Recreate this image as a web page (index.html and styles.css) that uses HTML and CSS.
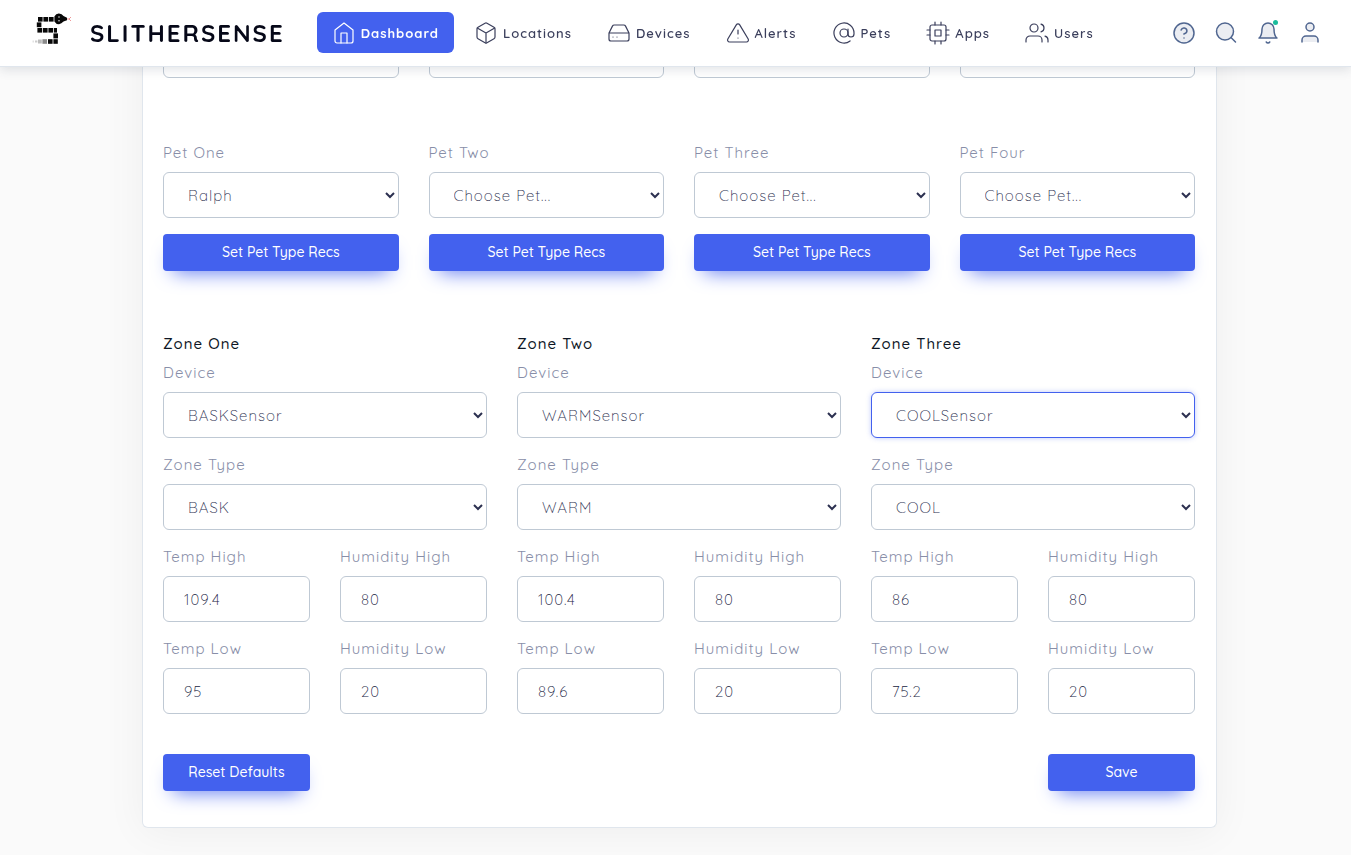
FILE: index.html
```html
<!DOCTYPE html>
<html lang="en">
<head>
<meta charset="utf-8">
<title>SlitherSense</title>
<meta name="viewport" content="width=device-width, initial-scale=1">
<link rel="stylesheet" href="styles.css">
</head>
<body>
<header class="topbar">
  <a class="brand" href="#">
    <svg class="brand-mark" viewBox="0 0 40 34" aria-hidden="true">
      <g fill="#080808">
        <rect x="6" y="5" width="4.6" height="4.6"/><rect x="11.4" y="5" width="4.6" height="4.6"/><rect x="16.8" y="5" width="4.8" height="4.6"/>
        <rect x="4.8" y="10.4" width="4.6" height="4.8"/>
        <rect x="5.4" y="16" width="4.8" height="4.6"/><rect x="11" y="16" width="4.6" height="4.6"/><rect x="16.4" y="16" width="4.6" height="4.6"/><rect x="21.8" y="16" width="3.2" height="4.6"/>
        <rect x="21.4" y="21.4" width="4.6" height="5"/>
        <rect x="21.4" y="27.2" width="4.4" height="4.6"/><rect x="16" y="27.2" width="4.6" height="4.6"/>
        <path d="M22.4 4.6Q24 1.4 27 1.6Q30 2 31.5 4L35 5.8V8.2L31.5 9.6Q29.5 12 27 12.2Q24 12.2 22.4 9.4Z"/>
      </g>
      <rect x="10.4" y="27.2" width="4.6" height="4.6" fill="#8b8b8b"/><rect x="6" y="27.5" width="3.8" height="4" fill="#bbb"/><rect x="3" y="28.5" width="2.4" height="2" fill="#ccc"/><rect x="0.5" y="28.5" width="1.5" height="2" fill="#e2e2e2"/>
      <circle cx="27" cy="5" r="0.8" fill="#ddd"/><circle cx="27" cy="8.8" r="0.8" fill="#ddd"/>
      <path d="M35 7h2l2-2M37 7l2 2" stroke="#e99" fill="none"/>
    </svg>
    <span class="brand-name">SLITHERSENSE</span>
  </a>
  <nav class="menu">
    <a class="menu-item menu-item-active" href="#"><svg class="icon" viewBox="0 0 24 24"><path d="M3 9l9-7 9 7v11a2 2 0 0 1-2 2H5a2 2 0 0 1-2-2z"/><path d="M9 22V12h6v10"/></svg>Dashboard</a>
    <a class="menu-item" href="#"><svg class="icon" viewBox="0 0 24 24"><path d="M21 16V8a2 2 0 0 0-1-1.73l-7-4a2 2 0 0 0-2 0l-7 4A2 2 0 0 0 3 8v8a2 2 0 0 0 1 1.73l7 4a2 2 0 0 0 2 0l7-4A2 2 0 0 0 21 16z"/><path d="M3.27 6.96L12 12.01l8.73-5.05M12 22.08V12"/></svg>Locations</a>
    <a class="menu-item" href="#"><svg class="icon" viewBox="0 0 24 24"><path d="M22 12H2M5.45 5.11L2 12v6a2 2 0 0 0 2 2h16a2 2 0 0 0 2-2v-6l-3.45-6.89A2 2 0 0 0 16.76 4H7.24a2 2 0 0 0-1.79 1.11zM6 16h.01M10 16h.01"/></svg>Devices</a>
    <a class="menu-item" href="#"><svg class="icon" viewBox="0 0 24 24"><path d="M10.29 3.86L1.82 18a2 2 0 0 0 1.71 3h16.94a2 2 0 0 0 1.71-3L13.71 3.86a2 2 0 0 0-3.42 0zM12 9v4M12 17h.01"/></svg>Alerts</a>
    <a class="menu-item" href="#"><svg class="icon" viewBox="0 0 24 24"><circle cx="12" cy="12" r="4"/><path d="M16 8v5a3 3 0 0 0 6 0v-1a10 10 0 1 0-3.92 7.94"/></svg>Pets</a>
    <a class="menu-item" href="#"><svg class="icon" viewBox="0 0 24 24"><rect x="4" y="4" width="16" height="16" rx="2"/><path d="M9 9h6v6H9zM9 1v3M15 1v3M9 20v3M15 20v3M20 9h3M20 14h3M1 9h3M1 14h3"/></svg>Apps</a>
    <a class="menu-item" href="#"><svg class="icon" viewBox="0 0 24 24"><path d="M17 21v-2a4 4 0 0 0-4-4H5a4 4 0 0 0-4 4v2M23 21v-2a4 4 0 0 0-3-3.87M16 3.13a4 4 0 0 1 0 7.75"/><circle cx="9" cy="7" r="4"/></svg>Users</a>
  </nav>
  <div class="tools">
    <button class="tool" type="button" aria-label="Help"><svg class="icon tool-icon" viewBox="0 0 24 24"><circle cx="12" cy="12" r="10"/><path d="M9.09 9a3 3 0 0 1 5.83 1c0 2-3 3-3 3M12 17h.01"/></svg></button>
    <button class="tool" type="button" aria-label="Search"><svg class="icon tool-icon" viewBox="0 0 24 24"><circle cx="11" cy="10.5" r="8.5"/><path d="M21.5 21l-4.5-4.5"/></svg></button>
    <button class="tool" type="button" aria-label="Notifications"><svg class="icon tool-icon" viewBox="0 0 24 24"><path d="M18 8A6 6 0 0 0 6 8c0 7-3 9-3 9h18s-3-2-3-9M13.73 21a2 2 0 0 1-3.46 0"/></svg><span class="dot"></span></button>
    <button class="tool" type="button" aria-label="Account"><svg class="icon tool-icon" viewBox="0 0 24 24"><path d="M20 21v-2a4 4 0 0 0-4-4H8a4 4 0 0 0-4 4v2"/><circle cx="12" cy="6" r="4"/></svg></button>
  </div>
</header>
<main class="page">
  <form class="card">
    <div class="row row-four">
      <input class="control" type="text" aria-label="Setting one">
      <input class="control" type="text" aria-label="Setting two">
      <input class="control" type="text" aria-label="Setting three">
      <input class="control" type="text" aria-label="Setting four">
    </div>
    <div class="row row-four pets">
      <div class="stack">
        <div class="field"><label for="pet1">Pet One</label><select class="control" id="pet1"><option>Ralph</option></select></div>
        <button class="btn" type="button">Set Pet Type Recs</button>
      </div>
      <div class="stack">
        <div class="field"><label for="pet2">Pet Two</label><select class="control" id="pet2"><option>Choose Pet...</option></select></div>
        <button class="btn" type="button">Set Pet Type Recs</button>
      </div>
      <div class="stack">
        <div class="field"><label for="pet3">Pet Three</label><select class="control" id="pet3"><option>Choose Pet...</option></select></div>
        <button class="btn" type="button">Set Pet Type Recs</button>
      </div>
      <div class="stack">
        <div class="field"><label for="pet4">Pet Four</label><select class="control" id="pet4"><option>Choose Pet...</option></select></div>
        <button class="btn" type="button">Set Pet Type Recs</button>
      </div>
    </div>
    <div class="row row-three">
      <section class="stack">
        <div class="zone-head"><h2 class="zone-title">Zone One</h2>
        <div class="field"><label for="d1">Device</label><select class="control" id="d1"><option>BASKSensor</option></select></div></div>
        <div class="field"><label for="t1">Zone Type</label><select class="control" id="t1"><option>BASK</option></select></div>
        <div class="pair">
          <div class="field"><label for="th1">Temp High</label><input class="control" id="th1" type="text" value="109.4"></div>
          <div class="field"><label for="hh1">Humidity High</label><input class="control" id="hh1" type="text" value="80"></div>
          <div class="field"><label for="tl1">Temp Low</label><input class="control" id="tl1" type="text" value="95"></div>
          <div class="field"><label for="hl1">Humidity Low</label><input class="control" id="hl1" type="text" value="20"></div>
        </div>
      </section>
      <section class="stack">
        <div class="zone-head"><h2 class="zone-title">Zone Two</h2>
        <div class="field"><label for="d2">Device</label><select class="control" id="d2"><option>WARMSensor</option></select></div></div>
        <div class="field"><label for="t2">Zone Type</label><select class="control" id="t2"><option>WARM</option></select></div>
        <div class="pair">
          <div class="field"><label for="th2">Temp High</label><input class="control" id="th2" type="text" value="100.4"></div>
          <div class="field"><label for="hh2">Humidity High</label><input class="control" id="hh2" type="text" value="80"></div>
          <div class="field"><label for="tl2">Temp Low</label><input class="control" id="tl2" type="text" value="89.6"></div>
          <div class="field"><label for="hl2">Humidity Low</label><input class="control" id="hl2" type="text" value="20"></div>
        </div>
      </section>
      <section class="stack">
        <div class="zone-head"><h2 class="zone-title">Zone Three</h2>
        <div class="field"><label for="d3">Device</label><select class="control control-focus" id="d3"><option>COOLSensor</option></select></div></div>
        <div class="field"><label for="t3">Zone Type</label><select class="control" id="t3"><option>COOL</option></select></div>
        <div class="pair">
          <div class="field"><label for="th3">Temp High</label><input class="control" id="th3" type="text" value="86"></div>
          <div class="field"><label for="hh3">Humidity High</label><input class="control" id="hh3" type="text" value="80"></div>
          <div class="field"><label for="tl3">Temp Low</label><input class="control" id="tl3" type="text" value="75.2"></div>
          <div class="field"><label for="hl3">Humidity Low</label><input class="control" id="hl3" type="text" value="20"></div>
        </div>
      </section>
    </div>
    <div class="actions">
      <button class="btn" type="reset">Reset Defaults</button>
      <button class="btn" type="submit">Save</button>
    </div>
  </form>
</main>
</body>
</html>
```
FILE: styles.css
```css
* { box-sizing: border-box; }
body {
  margin: 0;
  background: #fafafa;
  color: #3b3f5c;
  font-family: Quicksand, Nunito, Lato, sans-serif;
  font-size: 15px;
  line-height: 22px;
}
.topbar {
  position: fixed;
  inset: 0 0 auto 0;
  z-index: 2;
  display: flex;
  align-items: center;
  padding: 12px 29px 13px 32px;
  background: #fff;
  border-bottom: 1px solid #e0e6ed;
  box-shadow: 0 3px 10px rgba(60, 70, 90, 0.14);
}
.brand {
  display: flex;
  align-items: center;
  gap: 18px;
  margin-right: 32px;
  color: #060818;
  text-decoration: none;
}
.brand-mark { width: 40px; height: 34px; margin-bottom: 7px; }
.brand-name {
  font-size: 24px;
  font-weight: 700;
  letter-spacing: 2px;
  line-height: 40px;
}
.menu { display: flex; flex: 1; gap: 5px; }
.menu-item {
  display: flex;
  align-items: center;
  gap: 5px;
  height: 41px;
  padding: 0 15px;
  color: #3b3f5c;
  font-size: 13px;
  font-weight: 600;
  letter-spacing: 1px;
  text-decoration: none;
  border-radius: 6px;
}
.menu-item-active {
  background: #4361ee;
  color: #fff;
  font-weight: 700;
}
.icon {
  width: 24px;
  height: 24px;
  fill: none;
  stroke: currentColor;
  stroke-width: 1.2;
  stroke-linecap: round;
  stroke-linejoin: round;
}
.tools { display: flex; gap: 18px; }
.tool {
  position: relative;
  display: flex;
  padding: 0;
  border: 0;
  background: none;
  color: #506690;
}
.tool-icon { fill: #ebedf2; stroke-width: 1.5; }
.dot {
  position: absolute;
  top: -1px;
  right: 2px;
  width: 5px;
  height: 5px;
  border-radius: 50%;
  background: #1abc9c;
}
.page { padding: 0 134px 27px 142px; }
.card {
  padding: 32px 21px 36px 20px;
  background: #fff;
  border: 1px solid #e0e6ed;
  border-top: 0;
  border-radius: 0 0 6px 6px;
  box-shadow: 0 4px 40px rgba(0, 0, 0, 0.05);
}
.row { display: grid; gap: 30px; }
.row-four { grid-template-columns: repeat(4, 1fr); }
.row-three { grid-template-columns: repeat(3, 1fr); }
.pets { margin: 64px 0 62px; }
.stack { display: flex; flex-direction: column; gap: 16px; min-width: 0; }
.field, .zone-head { display: flex; flex-direction: column; gap: 8px; min-width: 0; }
.pair { display: grid; grid-template-columns: 1fr 1fr; gap: 16px 30px; }
label { color: #888ea8; letter-spacing: 1px; }
.zone-title {
  margin: 0;
  color: #0e1726;
  font-size: 15px;
  font-weight: 500;
  letter-spacing: 1px;
  line-height: 21px;
}
.control {
  width: 100%;
  height: 46px;
  padding: 0 20px;
  border: 1px solid #bfc9d4;
  border-radius: 6px;
  background: #fff;
  color: #20243f;
  font-family: inherit;
  font-size: 15px;
  font-weight: 300;
  letter-spacing: 1px;
}
select.control { padding-right: 2px; color: #2c3050; }
.control-focus {
  border-color: #4361ee;
  box-shadow: 0 0 5px rgba(67, 97, 238, 0.35);
}
.btn {
  height: 37px;
  padding: 0 0 2px;
  border: 0;
  border-radius: 4px;
  background: #4361ee;
  box-shadow: 0 10px 20px -10px #4361ee;
  color: #fff;
  font-family: inherit;
  font-size: 14px;
  font-weight: 500;
}
.actions { display: flex; justify-content: space-between; margin-top: 40px; }
.actions .btn { width: 147px; }
```
